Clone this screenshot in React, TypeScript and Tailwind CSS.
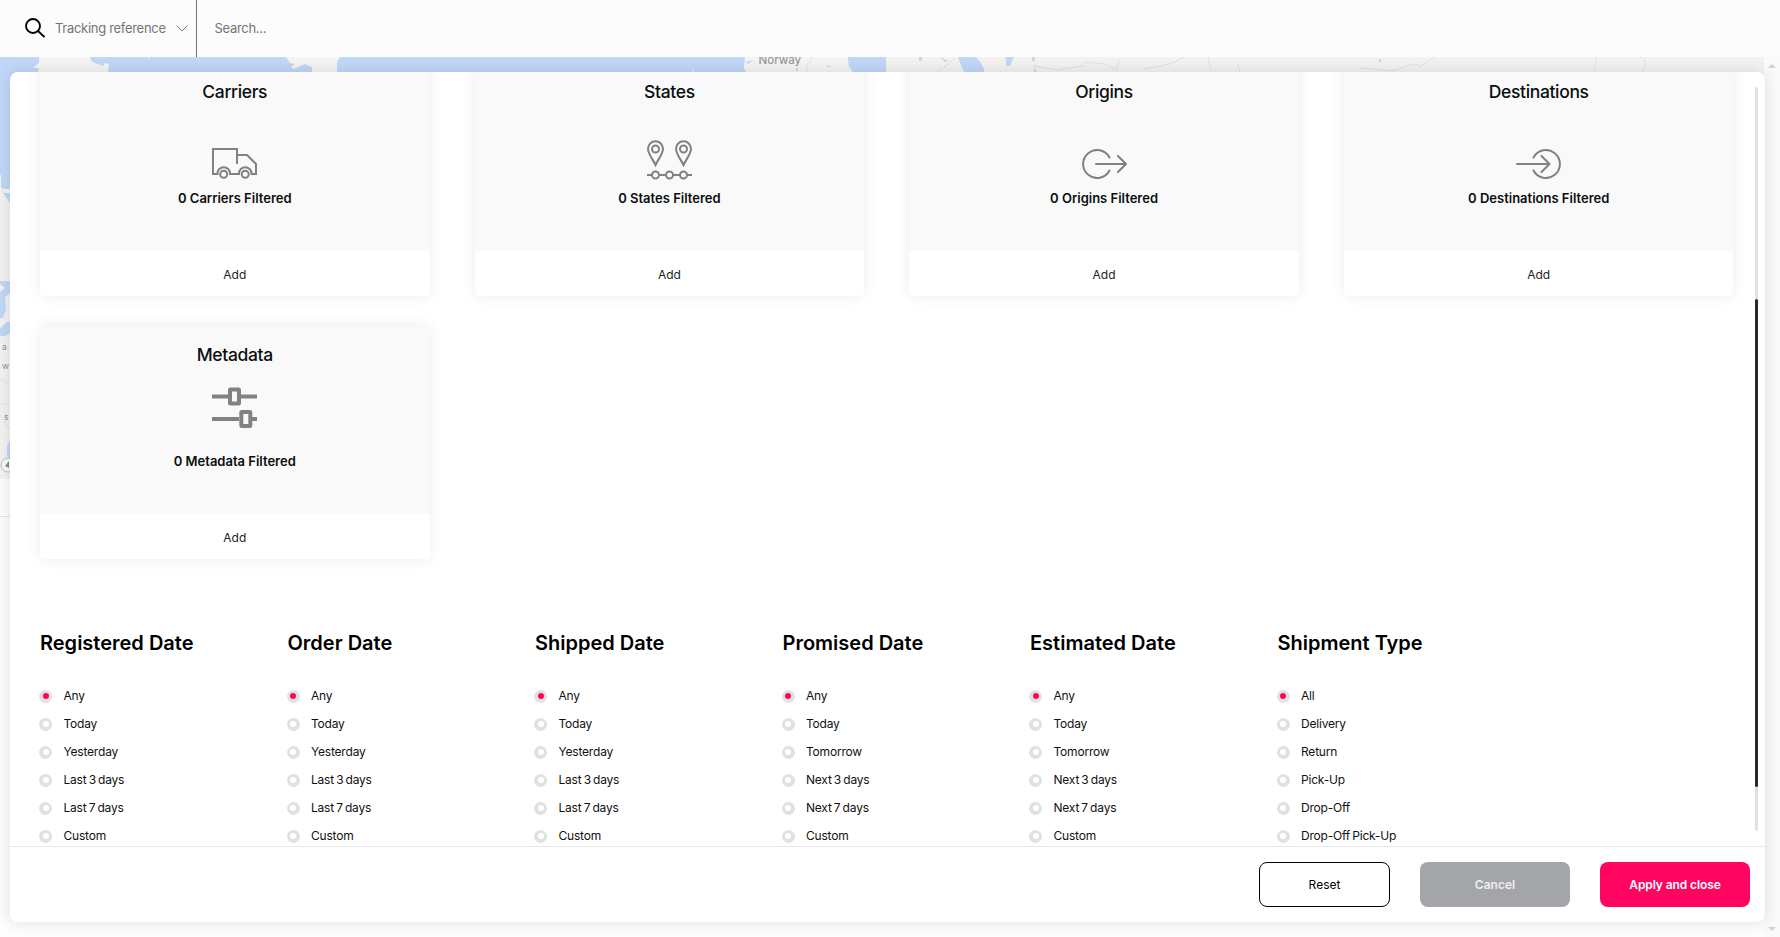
import React from "react";

const grey = "#818181";

function TruckIcon() {
  return (
    <svg width="45" height="32" viewBox="0 0 45 32" fill="none" stroke={grey} strokeWidth="2" className="mt-[30px] mr-px">
      <path d="M5.500 27H1V2H25V17M25 8H35L44 17V27H39.500M18 27H27" />
      <path d="M5.500 28V26.500A6.200 6.200 0 0 1 18 26.500V28M27 28V26.500A6.200 6.200 0 0 1 39.500 26.500V28" />
      <circle cx="11.700" cy="27.300" r="3.500" />
      <circle cx="33.200" cy="27.300" r="3.500" />
    </svg>
  );
}

function StatesIcon() {
  return (
    <svg width="45" height="40" viewBox="0 0 45 40" fill="none" stroke={grey} strokeWidth="2" className="mt-[23px]">
      <path d="M8.500 25C6 19.500 1 14 1 8.800A7.500 7.500 0 0 1 16 8.800C16 14 11 19.500 8.500 25ZM36.500 25C34 19.500 29 14 29 8.800A7.500 7.500 0 0 1 44 8.800C44 14 39 19.500 36.500 25Z" />
      <circle cx="8.500" cy="9" r="3.500" />
      <circle cx="36.500" cy="9" r="3.500" />
      <circle cx="8.500" cy="35" r="3.500" />
      <circle cx="22.500" cy="35" r="3.500" />
      <circle cx="36.500" cy="35" r="3.500" />
      <path d="M0 35H5M12 35H19M26 35H33M40 35H45" />
    </svg>
  );
}

function OriginIcon() {
  return (
    <svg width="45" height="30" viewBox="0 0 45 30" fill="none" stroke={grey} strokeWidth="2" strokeLinecap="round" strokeLinejoin="round" className="mt-[32px]">
      <path d="M27.500 8.500A14 14 0 1 0 27.500 21.500M14 15H44M36 7L44 15L36 23" />
    </svg>
  );
}

function DestinationIcon() {
  return (
    <svg width="45" height="30" viewBox="0 0 45 30" fill="none" stroke={grey} strokeWidth="2" strokeLinecap="round" strokeLinejoin="round" className="mt-[32px] mr-px">
      <path d="M17.500 8.500A14 14 0 1 1 17.500 21.500M1 15H33.500M25.500 7L33.500 15L25.500 23" />
    </svg>
  );
}

function MetadataIcon() {
  return (
    <svg width="45" height="42" viewBox="0 0 45 42" fill="none" stroke={grey} strokeWidth="4" className="mt-[7px] mr-px">
      <path d="M0 9.500H16M29 9.500H45M0 32H27M40 32H45" />
      <rect x="18" y="2.500" width="9" height="14" rx="0.500" />
      <rect x="29.300" y="25" width="9" height="14" rx="0.500" />
    </svg>
  );
}

interface CardProps {
  title: string;
  icon: React.ReactNode;
}

function FilterCard({ title, icon }: CardProps) {
  return (
    <section className="flex h-[233px] flex-col overflow-hidden rounded-[5px] bg-white shadow-[0_0_15px_rgba(0,0,0,0.08)]">
      <div className="flex h-[188px] flex-col items-center bg-[#f9f9f9] pt-[17px]">
        <h2 className="h-6 text-[17.500px] leading-6 font-medium tracking-[-0.35px] whitespace-nowrap text-[#0a0f0f]">{title}</h2>
        <div className="mt-[13px] flex h-[62px] items-start">{icon}</div>
        <p className="mt-[9px] text-[13px] leading-5 font-semibold whitespace-nowrap text-[#0a0f0f]">0 {title} Filtered</p>
      </div>
      <button className="h-[45px] pt-[3px] text-[12px] text-[#222]">Add</button>
    </section>
  );
}

const cards: CardProps[] = [
  { title: "Carriers", icon: <TruckIcon /> },
  { title: "States", icon: <StatesIcon /> },
  { title: "Origins", icon: <OriginIcon /> },
  { title: "Destinations", icon: <DestinationIcon /> },
  { title: "Metadata", icon: <MetadataIcon /> },
];

const past = ["Any", "Today", "Yesterday", "Last 3 days", "Last 7 days", "Custom"];
const future = ["Any", "Today", "Tomorrow", "Next 3 days", "Next 7 days", "Custom"];
const groups = [
  { title: "Registered Date", options: past },
  { title: "Order Date", options: past },
  { title: "Shipped Date", options: past },
  { title: "Promised Date", options: future },
  { title: "Estimated Date", options: future },
  { title: "Shipment Type", options: ["All", "Delivery", "Return", "Pick-Up", "Drop-Off", "Drop-Off Pick-Up"] },
];

function RadioGroup({ title, options }: { title: string; options: string[] }) {
  return (
    <section className="w-[247.500px] shrink-0">
      <h2 className="text-[20px] leading-7 font-semibold whitespace-nowrap text-black">{title}</h2>
      <div className="mt-[25px]">
        {options.map((option, i) => (
          <label key={option} className="flex h-7 items-center text-[12px] tracking-[-0.2px] [word-spacing:-1px] whitespace-nowrap text-[#111]">
            <span className="-ml-px flex size-[13px] items-center justify-center rounded-full bg-[#e0e1e1]">
              <span className={i === 0 ? "size-[6px] rounded-full bg-[#ff0560]" : "size-[6px] rounded-full bg-white"} />
            </span>
            <span className="ml-[11.500px]">{option}</span>
          </label>
        ))}
      </div>
    </section>
  );
}

function MapBackdrop() {
  return (
    <svg width="1764" height="470" viewBox="0 57 1764 470" fontFamily="Inter, sans-serif" fill="#8d8d8d" className="absolute top-[57px] left-0">
      <rect y="57" width="1764" height="422" fill="#f3f2f0" />
      <path d="M0 57H886V72H0Z" fill="#c1d7f7" />
      <path d="M0 70H30V203H10L1 190H0Z" fill="#c1d7f7" />
      <path d="M0 175H1V188L4 189H10V193H4L1 190H0ZM39 57H90L92 62L103 66L105 63L109 64L108 72H38L39 68L33 68L39 63ZM286 57H340L337 62L337 72H312V67L305 64L294 69L291 67L295 64L290 63ZM745 57H848L849 66L853 72H746L744 68Z" fill="#f5f4f2" />
      <path d="M148 57H150V58H148ZM692 72L694 69V71Z" fill="#f5f4f2" />
      <path d="M848 57H886L883 63L885 72H853L849 66Z" fill="#c1d7f7" />
      <path d="M958 57H976L981 63L984 69V72H964L960 63ZM1005 57H1014L1010 66H1006V62ZM940 57L948 61L945 62ZM919 57H922V61H919ZM1032 57H1035V61H1032ZM746 62L753 60L748 64ZM827 65L832 67H827ZM796 68H798V71H796ZM1379 59H1381V62H1379ZM1034 68L1037 72H1034Z" fill="#c1d7f7" />
      <path d="M0 281H10V293L5 297L6 309L3 318H0V292L5 288L0 284ZM0 328L7 322H10V333L5 336H0ZM10 440L7 446V456L10 459Z" fill="#c1d7f7" />
      <path d="M812 57L809 63L806 65L808 72M955 58L945 67L938 71M1034 66L1057 70L1083 66L1086 62L1105 64L1117 70L1119 60M1145 69L1170 64L1184 57M1208 57L1211 70M1238 64L1240 72M1360 68L1392 71L1413 64L1421 66L1435 57M1597 57L1594 72M1640 57L1646 62L1642 72" fill="none" stroke="#d8dbe0" strokeDasharray="3 1" />
      <path d="M0 379L10 384M0 404H10M0 415L6 424L10 430M0 516.500H10" fill="none" stroke="#e3e4e6" />
      <circle cx="8" cy="465" r="7" fill="#fafafa" stroke="#bdbdbd" />
      <path d="M5 466L9 461V468Z" fill="#8d8d8d" />
      <text x="758.500" y="64" fontSize="11.500" fontWeight="500" fill="#989898">Norway</text>
      <text x="2" y="350" fontSize="8.500">a</text>
      <text x="2" y="369" fontSize="8.500">w</text>
      <text x="4" y="420" fontSize="8.500">s</text>
    </svg>
  );
}

export default function App() {
  return (
    <div className="relative flex h-[937px] w-[1780px] flex-col overflow-hidden bg-[#fdfdfd] font-[Inter,sans-serif]">
      <header className="flex h-[57px] shrink-0 bg-[#fcfcfc]">
        <div className="flex w-[197px] items-center border-r border-[#6f6f6f] pl-[25px]">
          <svg width="20" height="20" viewBox="0 0 20 20" fill="none" stroke="black" strokeWidth="1.900" className="-mt-px">
            <circle cx="8" cy="8" r="7" />
            <path d="M13 13L19.500 19" />
          </svg>
          <span className="mt-px ml-[10px] text-[13px] tracking-[-0.300px] text-[#757575]">Tracking reference</span>
          <svg width="12" height="7" viewBox="0 0 12 7" fill="none" stroke="#777" className="mr-2 ml-auto">
            <path d="M0.500 0.500L6 6L11.500 0.500" />
          </svg>
        </div>
        <input aria-label="Search" placeholder="Search..." className="mt-px ml-[17.500px] w-80 bg-transparent text-[13px] tracking-[-0.300px] outline-none placeholder:text-[#757575]" />
      </header>
      <MapBackdrop />
      <div className="absolute top-[57px] right-0 flex h-[880px] w-4 flex-col items-center justify-between bg-[#fafafa] pt-[7px] pb-[6px]">
        <svg width="8" height="4" viewBox="0 0 8 4" fill="#d2d2d2"><path d="M0 4L4 0L8 4Z" /></svg>
        <svg width="8" height="4" viewBox="0 0 8 4" fill="#d2d2d2"><path d="M0 0L4 4L8 0Z" /></svg>
      </div>
      <main className="relative mt-[15px] ml-[10px] flex h-[850px] w-[1755px] flex-col rounded-lg bg-white shadow-[0_0_15px_rgba(0,0,0,0.12)]">
        <div className="relative h-[774px] overflow-hidden">
          <div className="-mt-[9px] grid grid-cols-[repeat(4,389.500px)] gap-x-[45.170px] gap-y-[30px] pl-[30px]">
            {cards.map((card) => (
              <FilterCard key={card.title} {...card} />
            ))}
          </div>
          <div className="mt-[70px] flex pl-[30px]">
            {groups.map((group) => (
              <RadioGroup key={group.title} {...group} />
            ))}
          </div>
          <div className="absolute top-[15px] right-[7px] h-[744px] w-[3px] rounded-full bg-[#e1e1e1] pt-[212px]">
            <div className="h-[488px] rounded-full bg-[#2a2a2a]" />
          </div>
        </div>
        <footer className="flex h-[76px] justify-end gap-[30px] border-t border-[#e8e8e8] pt-[15px] pr-[15px] text-[12px]">
          <button className="h-[45px] w-[131px] rounded-lg border border-black">Reset</button>
          <button className="h-[45px] w-[150px] rounded-lg bg-[#a4a5a9] font-semibold text-[#eee]">Cancel</button>
          <button className="h-[45px] w-[150px] rounded-lg bg-[#ff0560] font-semibold tracking-[-0.100px] text-white">Apply and close</button>
        </footer>
      </main>
    </div>
  );
}
